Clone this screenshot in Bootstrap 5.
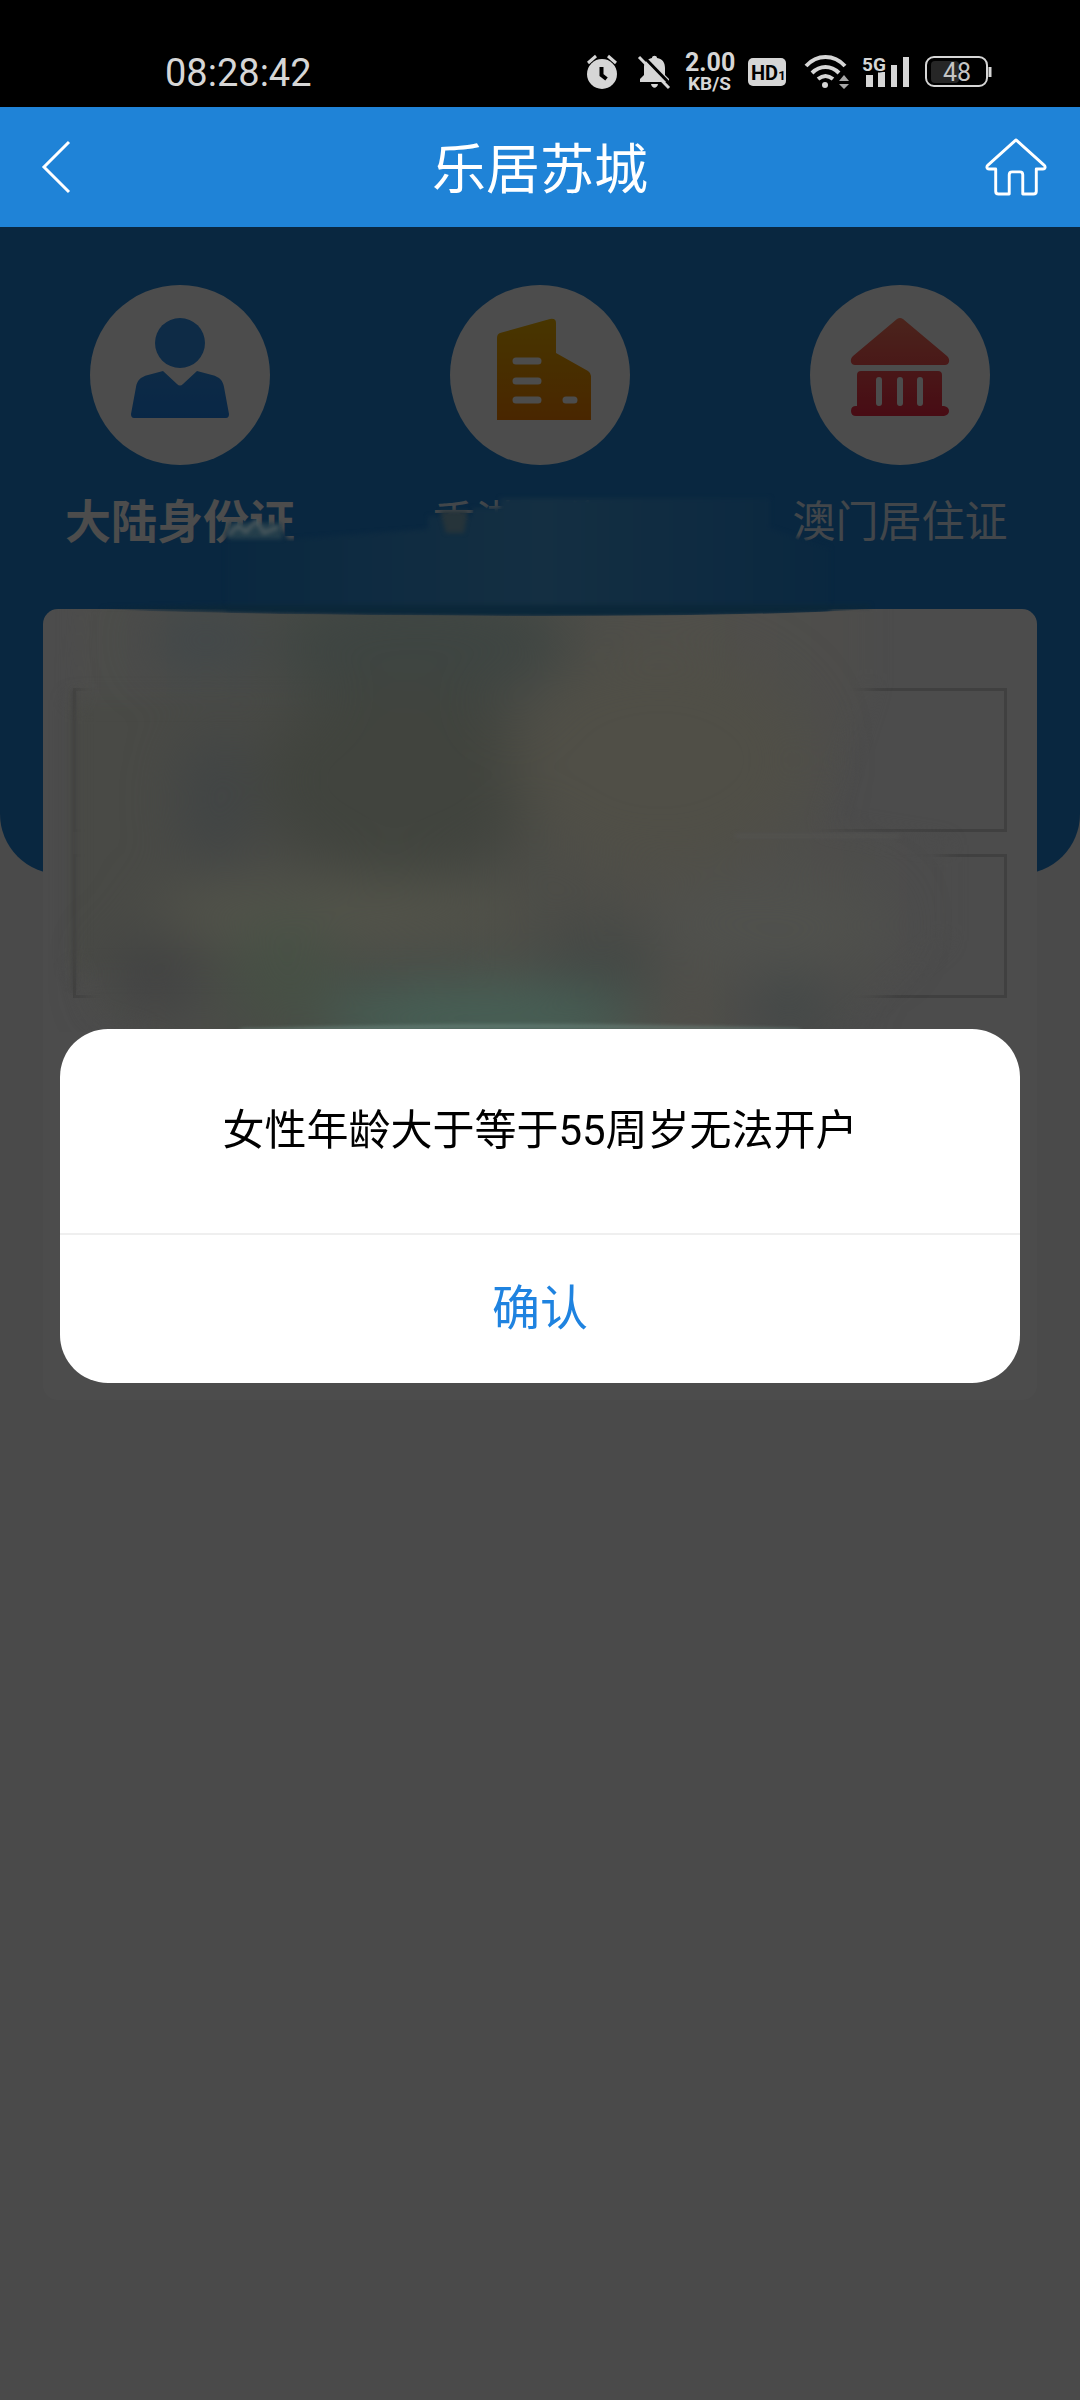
<!DOCTYPE html>
<html lang="zh-CN">
<head>
<meta charset="utf-8">
<meta name="viewport" content="width=device-width, initial-scale=1">
<title>乐居苏城</title>
<link href="https://cdn.jsdelivr.net/npm/bootstrap@5.3.0/dist/css/bootstrap.min.css" rel="stylesheet">
<style>
  body { font-family: Roboto, "Noto Sans CJK SC", sans-serif; background: #f7f7f7; }
  svg { display: block; overflow: visible; }
  .top-bars { z-index: 40; }
  .status-bar { height: 107px; padding: 36px 88px 0 165px; background: #000; color: #d6d6d6; }
  .clock { font-size: 38px; line-height: 74px; }
  .status-icons { gap: 14px; height: 72px; }
  .net-speed { width: 49px; font-weight: 700; }
  .net-speed .rate { font-size: 25px; line-height: 24px; }
  .net-speed .unit { font-size: 19px; line-height: 18px; }
  .title-bar { height: 120px; padding: 0 32px 0 42px; background: #1f83d7; }
  .title-bar a { width: 64px; }
  .title-bar h1 { padding: 8px 10px 0 0; font-size: 54px; line-height: 80px; }
  .hero { padding: 58px 0 320px; background: #1f83d7; border-radius: 0 0 60px 60px; }
  .kind { font-size: 43px; line-height: 64px; color: rgba(255,255,255,.85); }
  .kind.active { font-size: 46px; font-weight: 700; color: #fff; }
  .kind svg { margin-bottom: 25px; }
  .form-panel { margin: -265px 43px 0; padding: 79px 30px 0; gap: 22px; min-height: 791px; background: #fff; border-radius: 15px; }
  .form-panel .form-control { height: 144px; border: 3px solid #d8d8d8; border-radius: 0; font-size: 42px; background: #fff; }
  .dimmer { z-index: 10; background: rgba(0,0,0,.7); }
  .haze { z-index: 20; top: 470px; height: 562px; pointer-events: none; }
  .haze filter { color-interpolation-filters: sRGB; }
  .dialog-layer { z-index: 30; padding: 12px 60px 0; }
  .dialog-box { border-radius: 48px; background: #fff; color: #000; }
  .dialog-box p { padding: 70px 24px; font-size: 42px; line-height: 64px; }
  .dialog-box button { height: 150px; padding-bottom: 2px; border-top: 2px solid #efefef !important; font-size: 48px; line-height: 64px; color: #1f83e0; }
</style>
<script src="https://cdn.jsdelivr.net/npm/bootstrap@5.3.0/dist/js/bootstrap.bundle.min.js"></script>
</head>
<body class="position-relative min-vh-100">

<div class="top-bars position-relative">
  <div class="status-bar d-flex justify-content-between">
    <div class="clock">08:28:42</div>
    <div class="status-icons d-flex align-items-center">
      <!-- alarm -->
      <svg width="38" height="34" viewBox="0 0 38 34" fill="#d6d6d6"><circle cx="15" cy="19" r="15"/><path d="M1 8 9 1M29 8 21 1" stroke="#d6d6d6" stroke-width="3" fill="none"/><path d="M14.500 12v8l5 4" fill="none" stroke="#000" stroke-width="4"/></svg>
      <!-- muted bell -->
      <svg width="32" height="34" viewBox="0 0 32 34"><path d="M1 27v-3l4-4v-8C5 7 8 4 13 3c0-3 5-3 5 0 6 1 8 5 8 10v7l4 4v3ZM12 29h7c-1 5-6 5-7 0Z" fill="#d6d6d6"/><path d="M3 0 33 31" stroke="#000" stroke-width="3"/><path d="M0 2 30 33" stroke="#d6d6d6" stroke-width="3"/></svg>
      <div class="net-speed text-center"><div class="rate">2.00</div><div class="unit">KB/S</div></div>
      <!-- HD voice -->
      <svg width="43" height="28" viewBox="0 0 43 28"><rect width="38" height="28" rx="5" fill="#d6d6d6"/><text x="3" y="22" font-size="20" font-weight="700" fill="#000" font-family="Roboto">HD<tspan font-size="13">1</tspan></text></svg>
      <!-- wifi -->
      <svg width="44" height="34" viewBox="0 0 44 34" fill="none" stroke="#d6d6d6" stroke-width="4"><path d="M1 11C12-1 29-1 40 11M7 18c8-8 19-8 27 0M13 24c5-4 10-4 15 0"/><circle cx="20" cy="30" r="3" fill="#d6d6d6" stroke="none"/><path d="m39 20 5 6H34ZM39 34l5-5H34Z" fill="#a8a8a8" stroke="none"/></svg>
      <!-- mobile signal -->
      <svg width="48" height="32" viewBox="0 0 48 32" fill="#d6d6d6"><path d="M3 19h7v12H3ZM15 16h7v15h-7ZM28 9h6v22h-6ZM40 1h6v30h-6Z"/><text x="-1" y="15" font-size="19" font-weight="700" font-family="Roboto" stroke="#000" stroke-width="3" paint-order="stroke">5G</text></svg>
      <!-- battery -->
      <svg width="67" height="32" viewBox="0 0 67 32"><rect x="6" y="5" width="28" height="22" rx="4" fill="#262626"/><rect x="1" y="1" width="61" height="29" rx="8" fill="none" stroke="#d6d6d6" stroke-width="2"/><path d="M65 11v10" stroke="#d6d6d6" stroke-width="3"/><text x="32" y="25" text-anchor="middle" font-size="25" fill="#c4c4c4" font-family="Roboto">48</text></svg>
    </div>
  </div>
  <header class="title-bar d-flex align-items-center justify-content-between text-white">
    <a href="#" aria-label="返回" class="text-white"><svg width="64" height="52" viewBox="0 0 64 52" fill="none" stroke="currentColor" stroke-width="3"><path d="M27 1 2 26l25 25"/></svg></a>
    <h1 class="m-0 fw-normal">乐居苏城</h1>
    <a href="#" aria-label="首页" class="text-white"><svg width="64" height="58" viewBox="0 0 64 60" fill="none" stroke="currentColor" stroke-width="3" stroke-linejoin="round"><path d="M32 2 3 28c-2 2-1 4 1 4h7v23c0 2 1 3 3 3h11V38q0-3 3-3h8q3 0 3 3v20h11c2 0 3-1 3-3V32h7c2 0 3-2 1-4Z"/></svg></a>
  </header>
</div>

<main>
  <section class="hero">
    <div class="row g-0 text-center">
      <div class="col-4 kind active">
        <svg class="mx-auto" width="180" height="180" viewBox="0 0 180 180"><defs><linearGradient id="gBlue" x2="0" y2="1"><stop stop-color="#2c8de8"/><stop offset="1" stop-color="#2084ec"/></linearGradient></defs><circle cx="90" cy="90" r="90" fill="#fff"/><circle cx="90" cy="58" r="25" fill="#3090ea"/><path d="M73 86 87 99q3 3 6 0l14-13 15 4c8 2 11 6 12 12l5 27q0 4-3 4H44q-3 0-3-4l5-27c1-6 4-10 12-12Z" fill="url(#gBlue)"/></svg>
        大陆身份证
      </div>
      <div class="col-4 kind">
        <svg class="mx-auto" width="180" height="180" viewBox="0 0 180 180"><defs><linearGradient id="gGold" x2="0" y2="1"><stop stop-color="#f0b400"/><stop offset="1" stop-color="#f48000"/></linearGradient></defs><circle cx="90" cy="90" r="90" fill="#fff"/><path d="M47 53q0-4 3-5l50-14q6-1 6 4v30l32 18q3 2 3 5v44H47Z" fill="url(#gGold)"/><path d="M66 76h22M66 96h22M66 115h22M116 115h8" stroke="#fff" stroke-width="7" stroke-linecap="round"/></svg>
        香港居住证
      </div>
      <div class="col-4 kind">
        <svg class="mx-auto" width="180" height="180" viewBox="0 0 180 180"><defs><linearGradient id="gRed" gradientUnits="userSpaceOnUse" x1="0" y1="33" x2="0" y2="131"><stop stop-color="#fb7a5e"/><stop offset="1" stop-color="#f02844"/></linearGradient></defs><circle cx="90" cy="90" r="90" fill="#fff"/><path d="M87 34q3-2 6 0l44 37c4 4 2 9-2 9H45c-4 0-6-5-2-9ZM51 86h77q4 0 4 4v31h2q5 1 5 5t-5 5H46q-5 0-5-5t5-5h1V90q0-4 4-4Z" fill="url(#gRed)"/><path d="M69 95v23M90 95v23M110 95v23" stroke="#fff" stroke-width="6" stroke-linecap="round"/></svg>
        澳门居住证
      </div>
    </div>
  </section>
  <form class="form-panel d-flex flex-column position-relative">
    <input class="form-control" type="text" aria-label="姓名">
    <input class="form-control" type="text" aria-label="证件号码">
  </form>
</main>

<div class="dimmer position-fixed top-0 start-0 w-100 h-100"></div>

<!-- soft smear that hides the personal data -->
<svg class="haze position-absolute start-0 w-100" viewBox="0 470 1080 562" preserveAspectRatio="none" aria-hidden="true">
  <defs>
    <filter id="b2" filterUnits="userSpaceOnUse" x="0" y="470" width="1080" height="580"><feGaussianBlur stdDeviation="2"/></filter>
    <filter id="b10" filterUnits="userSpaceOnUse" x="-100" y="400" width="1280" height="800"><feGaussianBlur stdDeviation="10"/></filter>
    <filter id="b35" filterUnits="userSpaceOnUse" x="-100" y="400" width="1280" height="800"><feGaussianBlur stdDeviation="28"/></filter>
    <linearGradient id="gSea" gradientUnits="userSpaceOnUse" x1="226" y1="0" x2="860" y2="0"><stop stop-color="#0a2840"/><stop offset=".5" stop-color="#142f42"/><stop offset="1" stop-color="#092740"/></linearGradient>
    <linearGradient id="gBody" gradientUnits="userSpaceOnUse" x1="75" y1="0" x2="940" y2="0"><stop stop-color="#4d4d4b"/><stop offset=".35" stop-color="#484a45"/><stop offset=".7" stop-color="#504f4a"/><stop offset="1" stop-color="#4c4c4c"/></linearGradient>
    <clipPath id="cBody"><path d="M43 609h57q130 6 440 7 230 0 330-7h167v423H43Z"/></clipPath>
  </defs>
  <path d="M226 531h58l4 8 140-10v-13h44v-8h28v-10h270v30l60 20v64q-220 6-604-2Z" fill="url(#gSea)" filter="url(#b2)"/>
  <path d="M228 523h54v16h-54Z" fill="#243e4b" filter="url(#b2)"/>
  <path d="m228 535 10-9 8 6 10-11 8 12 14-6" fill="none" stroke="#525d60" stroke-width="3" filter="url(#b2)"/>
  <path d="M440 511h28l-4 22h-18Z" fill="#26343a" filter="url(#b2)"/>
  <path d="M100 608q130 7 440 8 230 0 330-8v-3H228Z" fill="#0b2739" filter="url(#b2)"/>
  <g clip-path="url(#cBody)">
    <path d="M80 590h790v95l-45 140 120 20v95l-95 80-60 50H210l-70-40-50-15-12-40V690Z" fill="url(#gBody)" filter="url(#b10)"/>
    <path d="M72 700h400v270H72Z" fill="#494a46" filter="url(#b10)"/>
    <g filter="url(#b35)">
      <ellipse cx="205" cy="640" rx="55" ry="30" fill="#40474a"/>
      <ellipse cx="420" cy="645" rx="150" ry="55" fill="#3e4542"/>
      <ellipse cx="400" cy="780" rx="140" ry="100" fill="#41443e"/>
      <ellipse cx="215" cy="800" rx="30" ry="70" fill="#404445"/>
      <ellipse cx="660" cy="760" rx="150" ry="110" fill="#504f47"/>
      <ellipse cx="340" cy="912" rx="190" ry="32" fill="#54554b"/>
      <ellipse cx="770" cy="925" rx="120" ry="50" fill="#50514d"/>
      <ellipse cx="155" cy="975" rx="45" ry="35" fill="#414242"/>
      <ellipse cx="285" cy="975" rx="60" ry="60" fill="#475045"/>
      <ellipse cx="600" cy="965" rx="60" ry="40" fill="#444845"/>
      <ellipse cx="480" cy="1018" rx="160" ry="34" fill="#466257"/>
      <ellipse cx="790" cy="1010" rx="50" ry="30" fill="#424747"/>
    </g>
    <path d="M735 836h165" stroke="#545452" stroke-width="3" filter="url(#b2)"/>
    <path d="M240 1031q300-9 560 0" fill="none" stroke="#7d9a92" stroke-width="2" filter="url(#b2)"/>
  </g>
  <path d="M74 690v300" stroke="#40403e" stroke-width="3" filter="url(#b2)"/>
</svg>

<div class="dialog-layer position-fixed top-0 start-0 w-100 h-100 d-flex align-items-center">
  <div class="dialog-box w-100 overflow-hidden text-center" role="alertdialog" aria-labelledby="msg">
    <p id="msg" class="m-0">女性年龄大于等于55周岁无法开户</p>
    <button type="button" class="w-100 bg-transparent border-0">确认</button>
  </div>
</div>
</body>
</html>
